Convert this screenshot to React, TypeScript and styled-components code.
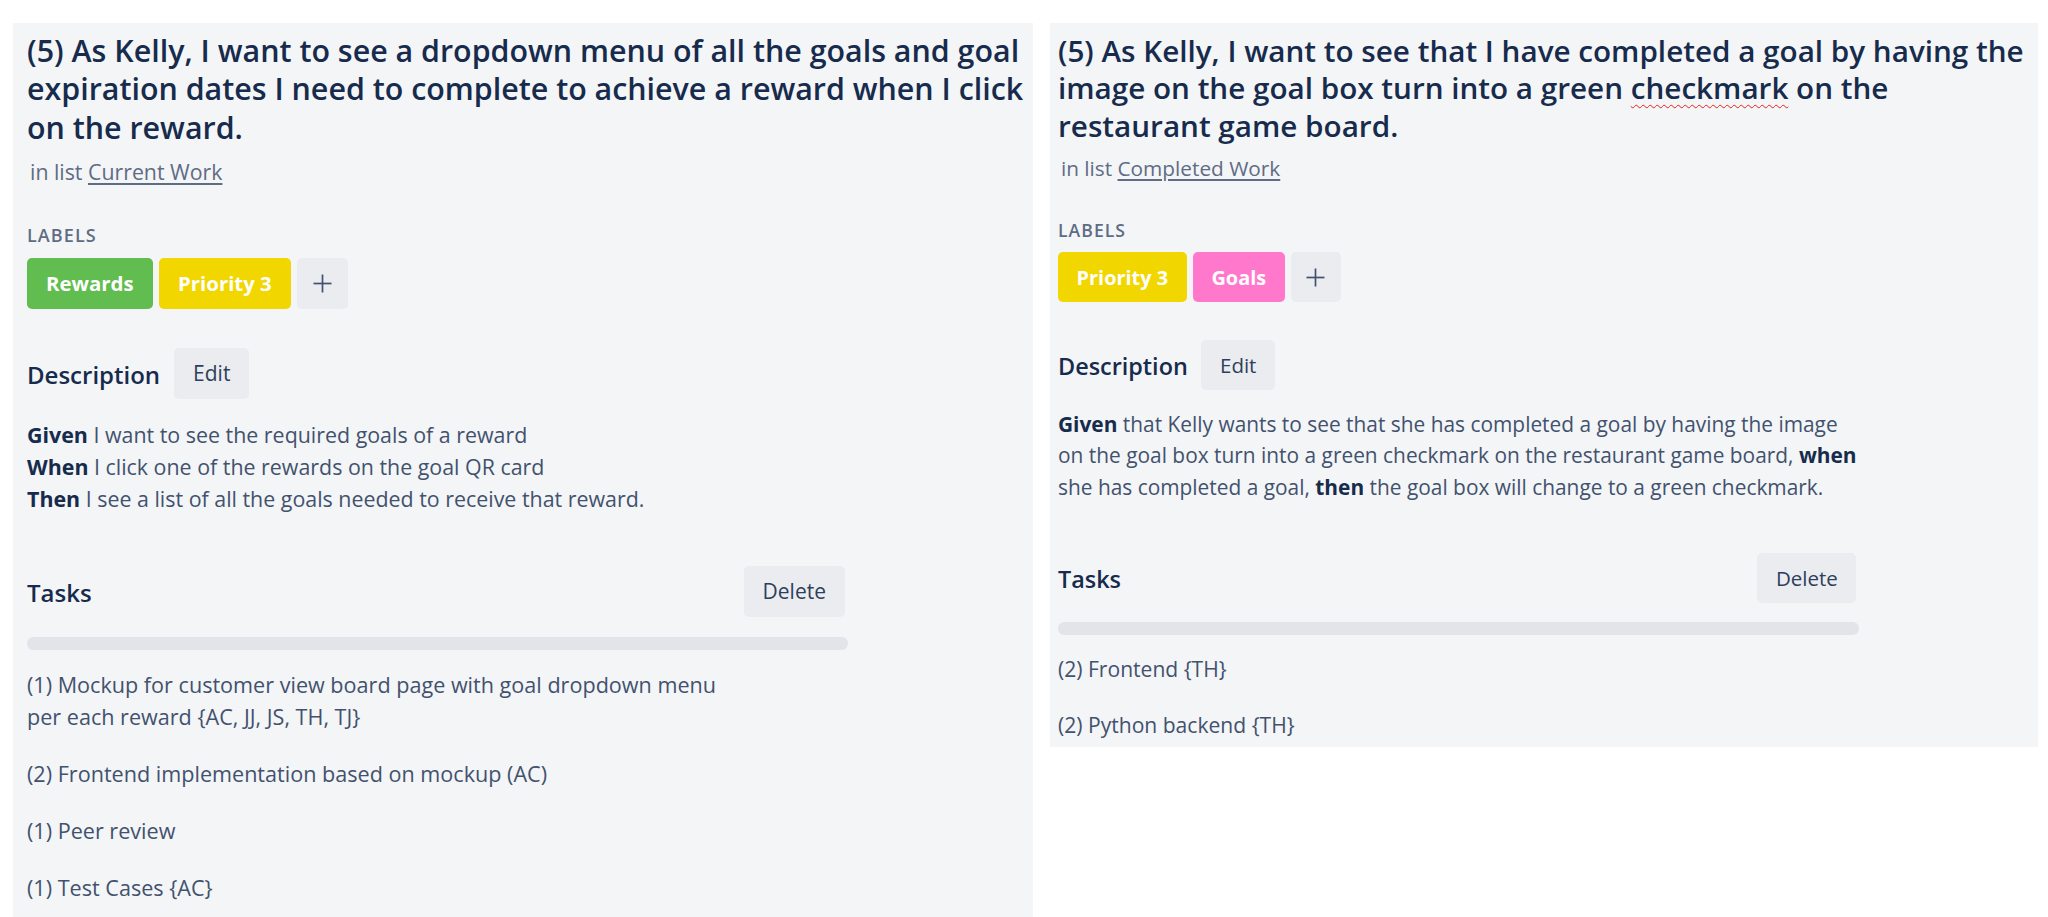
import React from "react";
import styled, { createGlobalStyle, ThemeProvider } from "styled-components";

type P = { theme: any };
const s = (n: number) => ({ theme }: P) => `${(n * theme.r).toFixed(2)}px`;

const GlobalStyle = createGlobalStyle`
  html, body { margin: 0; padding: 0; background: #ffffff; }
  body {
    font-family: "Open Sans", "Noto Sans", "DejaVu Sans", sans-serif;
    color: #172b4d;
  }
  * { box-sizing: border-box; }
`;

const Page = styled.main`
  display: flex;
  align-items: flex-start;
  gap: 17px;
  width: 2048px;
  height: 917px;
  padding: 23px 0 0 13px;
  overflow: hidden;
`;

const Panel = styled.section<{ $width: number; $padLeft: number; $stretch?: boolean }>`
  flex-shrink: 0;
  width: ${(p) => p.$width}px;
  align-self: ${(p) => (p.$stretch ? "stretch" : "flex-start")};
  background: #f4f5f7;
  padding: ${s(9)} 0 ${s(7)} ${(p) => p.$padLeft}px;
  display: flex;
  flex-direction: column;
`;

const Title = styled.h2`
  margin: 0;
  font-size: ${s(30.4)};
  line-height: ${s(38.4)};
  font-weight: 600;
  color: #172b4d;
`;

const TitleLine = styled.span`
  display: block;
  white-space: nowrap;
`;

const Misspelled = styled.span`
  text-decoration: underline wavy #e5201b;
  text-decoration-thickness: 1px;
  text-underline-offset: ${s(5)};
`;

const ListLine = styled.p`
  margin: ${s(8.6)} 0 0 ${s(3)};
  font-size: ${s(21.3)};
  line-height: ${s(32)};
  color: #5e6c84;
`;

const ListLink = styled.a`
  color: #5e6c84;
  text-decoration: underline;
  text-decoration-thickness: 1.5px;
  text-underline-offset: ${s(3)};
`;

const Main = styled.div`
  width: ${s(821)};
  display: flex;
  flex-direction: column;
`;

const SectionLabel = styled.h3`
  margin: ${s(35.4)} 0 0;
  font-size: ${s(18)};
  line-height: ${s(25.6)};
  font-weight: 600;
  letter-spacing: 0.06em;
  text-transform: uppercase;
  color: #5e6c84;
`;

const LabelRow = styled.div`
  display: flex;
  gap: ${s(6.4)};
  margin-top: ${s(9.2)};
`;

const Label = styled.span<{ $color: string }>`
  display: inline-flex;
  align-items: center;
  height: ${s(51)};
  padding: 0 ${s(19)};
  border-radius: ${s(5)};
  background: ${(p) => p.$color};
  color: #ffffff;
  font-size: ${s(20.4)};
  font-weight: 700;
  white-space: nowrap;
`;

const AddButton = styled.button`
  display: inline-flex;
  align-items: center;
  justify-content: center;
  width: ${s(51)};
  height: ${s(51)};
  padding: 0;
  border: 0;
  border-radius: ${s(5)};
  background: #eaecf0;
  color: #42526e;
`;

const SectionHeader = styled.div<{ $spread?: boolean; $top: number }>`
  display: flex;
  align-items: center;
  justify-content: ${(p) => (p.$spread ? "space-between" : "flex-start")};
  gap: ${s(14)};
  margin-top: ${(p) => s(p.$top)(p)};
`;

const SectionTitle = styled.h3`
  margin: 0;
  padding-top: ${s(3)};
  font-size: ${s(24)};
  line-height: ${s(32)};
  font-weight: 600;
  color: #172b4d;
`;

const GrayButton = styled.button<{ $inset?: boolean }>`
  height: ${s(51)};
  padding: 0 ${s(19)};
  margin-right: ${(p) => (p.$inset ? s(3)(p) : "0")};
  border: 0;
  border-radius: ${s(5)};
  background: #eaecf0;
  color: #2e3f5c;
  font-family: inherit;
  font-size: ${s(21)};
`;

const DescBody = styled.div`
  margin-top: ${s(19.8)};
  font-size: ${s(21.4)};
  line-height: ${s(32)};
  color: #42526e;
`;

const DescLine = styled.p`
  margin: 0;
  white-space: nowrap;
`;

const Strong = styled.strong`
  font-weight: 700;
  color: #172b4d;
`;

const ProgressTrack = styled.div`
  margin-top: ${s(20)};
  height: ${s(12.8)};
  border-radius: ${s(6.4)};
  background: #e2e4e9;
`;

const TaskList = styled.ul`
  list-style: none;
  margin: ${s(19)} 0 0;
  padding: 0;
  display: flex;
  flex-direction: column;
  gap: ${s(25)};
`;

const TaskItem = styled.li`
  font-size: ${s(21.6)};
  line-height: ${s(32)};
  color: #42526e;
`;

const TaskLine = styled.span`
  display: block;
  white-space: nowrap;
`;

const PlusIcon = () => (
  <svg width="21" height="21" viewBox="0 0 21 21" fill="none" stroke="currentColor" strokeWidth="1.7">
    <line x1="10.5" y1="1.5" x2="10.5" y2="19.5" />
    <line x1="1.5" y1="10.5" x2="19.5" y2="10.5" />
  </svg>
);

type CardData = {
  r: number;
  width: number;
  padLeft: number;
  stretch?: boolean;
  title: React.ReactNode[];
  list: string;
  labels: { name: string; color: string }[];
  description: React.ReactNode[];
  tasks: string[][];
};

const GREEN = "#61bd4f";
const YELLOW = "#f2d600";
const PINK = "#ff78cb";

const cards: CardData[] = [
  {
    r: 1,
    width: 1020,
    padLeft: 14,
    stretch: true,
    title: [
      "(5) As Kelly, I want to see a dropdown menu of all the goals and goal",
      "expiration dates I need to complete to achieve a reward when I click",
      "on the reward.",
    ],
    list: "Current Work",
    labels: [
      { name: "Rewards", color: GREEN },
      { name: "Priority 3", color: YELLOW },
    ],
    description: [
      <>
        <Strong>Given</Strong> I want to see the required goals of a reward
      </>,
      <>
        <Strong>When</Strong> I click one of the rewards on the goal QR card
      </>,
      <>
        <Strong>Then</Strong> I see a list of all the goals needed to receive that reward.
      </>,
    ],
    tasks: [
      ["(1) Mockup for customer view board page with goal dropdown menu", "per each reward {AC, JJ, JS, TH, TJ}"],
      ["(2) Frontend implementation based on mockup (AC)"],
      ["(1) Peer review"],
      ["(1) Test Cases {AC}"],
    ],
  },
  {
    r: 0.976,
    width: 988,
    padLeft: 8,
    title: [
      "(5) As Kelly, I want to see that I have completed a goal by having the",
      <>
        image on the goal box turn into a green <Misspelled>checkmark</Misspelled> on the
      </>,
      "restaurant game board.",
    ],
    list: "Completed Work",
    labels: [
      { name: "Priority 3", color: YELLOW },
      { name: "Goals", color: PINK },
    ],
    description: [
      <>
        <Strong>Given</Strong> that Kelly wants to see that she has completed a goal by having the image
      </>,
      <>
        on the goal box turn into a green checkmark on the restaurant game board, <Strong>when</Strong>
      </>,
      <>
        she has completed a goal, <Strong>then</Strong> the goal box will change to a green checkmark.
      </>,
    ],
    tasks: [["(2) Frontend {TH}"], ["(2) Python backend {TH}"]],
  },
];

const Card = ({ data }: { data: CardData }) => (
  <ThemeProvider theme={{ r: data.r }}>
    <Panel $width={data.width} $padLeft={data.padLeft} $stretch={data.stretch}>
      <Title>
        {data.title.map((line, i) => (
          <TitleLine key={i}>{line}</TitleLine>
        ))}
      </Title>
      <ListLine>
        in list <ListLink href="#">{data.list}</ListLink>
      </ListLine>
      <Main>
        <SectionLabel>Labels</SectionLabel>
        <LabelRow>
          {data.labels.map((l) => (
            <Label key={l.name} $color={l.color}>
              {l.name}
            </Label>
          ))}
          <AddButton aria-label="Add label">
            <PlusIcon />
          </AddButton>
        </LabelRow>
        <SectionHeader $top={39}>
          <SectionTitle>Description</SectionTitle>
          <GrayButton>Edit</GrayButton>
        </SectionHeader>
        <DescBody>
          {data.description.map((line, i) => (
            <DescLine key={i}>{line}</DescLine>
          ))}
        </DescBody>
        <SectionHeader $top={51.2} $spread>
          <SectionTitle>Tasks</SectionTitle>
          <GrayButton $inset>Delete</GrayButton>
        </SectionHeader>
        <ProgressTrack />
        <TaskList>
          {data.tasks.map((lines, i) => (
            <TaskItem key={i}>
              {lines.map((t, j) => (
                <TaskLine key={j}>{t}</TaskLine>
              ))}
            </TaskItem>
          ))}
        </TaskList>
      </Main>
    </Panel>
  </ThemeProvider>
);

export default function App() {
  return (
    <>
      <GlobalStyle />
      <Page>
        {cards.map((c, i) => (
          <Card key={i} data={c} />
        ))}
      </Page>
    </>
  );
}
